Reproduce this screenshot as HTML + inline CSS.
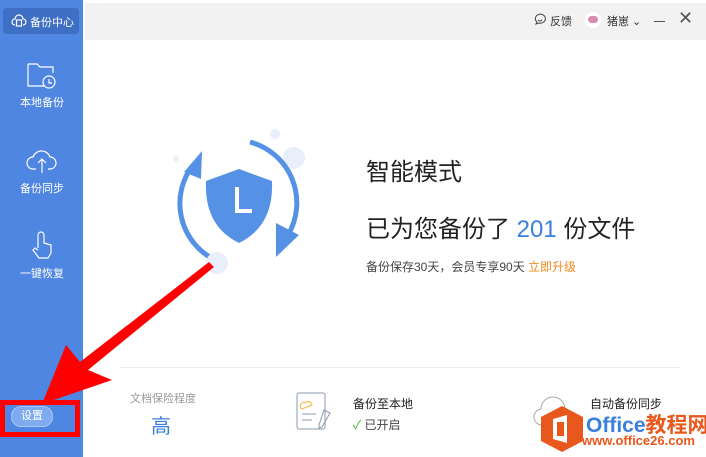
<!DOCTYPE html>
<html><head><meta charset="utf-8"><style>
body{margin:0;width:706px;height:457px;overflow:hidden;background:#fff;font-family:"Liberation Sans","Noto Sans CJK SC",sans-serif;position:relative}
.sb{position:absolute;left:0;top:0;width:83px;height:457px;background:#4f86e1}
.top{position:absolute;left:85px;top:3px;right:0;height:37px;background:#f2f2f2}
.t{position:absolute;white-space:nowrap}
.w{color:#fff;font-size:11px}
</style></head><body>
<div class="sb"></div>
<div style="position:absolute;left:3px;top:8px;width:76px;height:26px;background:#3f6fc4;border-radius:4px"></div>
<div class="t w" style="left:30px;top:14px;font-size:11px">备份中心</div>
<svg style="position:absolute;left:11px;top:14px" width="16" height="14" viewBox="0 0 16 14" fill="none" stroke="#fff" stroke-width="1.2"><path d="M4 11a3 3 0 0 1 0-6 4 4 0 0 1 8 0 3 3 0 0 1 0 6"/><rect x="5.5" y="6" width="5" height="6"/></svg>
<svg style="position:absolute;left:27px;top:62px" width="30" height="28" fill="none" stroke="#fff" stroke-width="1.2"><path d="M1 2h9l3 3h13v6M1 2v22h17"/><circle cx="22" cy="20" r="6"/><path d="M22 17v4h3"/></svg>
<div class="t w" style="left:20px;top:94px">本地备份</div>
<svg style="position:absolute;left:26px;top:147px" width="32" height="28" fill="none" stroke="#fff" stroke-width="1.2"><path d="M10 22H7a6 6 0 0 1 0-12 9 9 0 0 1 17 0 6 6 0 0 1 0 12h-2M16 26V12M12 16l4-4 4 4"/></svg>
<div class="t w" style="left:20px;top:180px">备份同步</div>
<svg style="position:absolute;left:28px;top:230px" width="28" height="30" fill="none" stroke="#fff" stroke-width="1.2"><path d="M10 18V5a3 3 0 0 1 6 0v8l7 2v8l-3 5H11l-6-8 2-2 3 2"/></svg>
<div class="t w" style="left:20px;top:265px">一键恢复</div>
<div style="position:absolute;left:0;top:400px;width:80px;height:37px;background:red"></div>
<div style="position:absolute;left:5px;top:405px;width:70px;height:27px;background:#4f86e1"></div>
<div style="position:absolute;left:11px;top:406px;width:40px;height:19px;background:#7eaaf0;border:1px solid #a9c6f5;border-radius:10px;color:#fff;font-size:11px;text-align:center;line-height:19px">设置</div>
<div class="top"></div>
<svg style="position:absolute;left:533px;top:13px" width="14" height="13" fill="none" stroke="#444" stroke-width="1"><path d="M3 11l1-2a5 4.5 0 1 1 2 1z"/><path d="M5 7q2 2 4 0"/></svg>
<div class="t" style="left:550px;top:13px;font-size:11px;color:#333">反馈</div>
<div style="position:absolute;left:585px;top:12px;width:16px;height:16px;border-radius:8px;background:#fff"></div>
<div style="position:absolute;left:588px;top:16px;width:10px;height:7px;border-radius:4px;background:#d98cb0"></div>
<div class="t" style="left:607px;top:13px;font-size:11px;color:#333">猪崽 ⌄</div>
<div style="position:absolute;left:654px;top:21px;width:11px;height:1px;background:#555"></div>
<div class="t" style="left:678px;top:8px;font-size:18px;color:#555">✕</div>
<svg style="position:absolute;left:160px;top:120px" width="160" height="160">
<circle cx="115" cy="14" r="5" fill="#e8eefa"/><circle cx="134" cy="38" r="11" fill="#e8eefa"/><circle cx="16" cy="39" r="3" fill="#e8eefa"/>
<path d="M33 45A63 63 0 0 0 55 140" fill="none" stroke="#5592e6" stroke-width="5"/>
<path d="M24 52l18-21 -1 28z" fill="#5592e6"/>
<path d="M90 22A63 63 0 0 1 128 115" fill="none" stroke="#5592e6" stroke-width="5"/>
<path d="M116 103l0 34 23-22z" fill="#5592e6"/>
<circle cx="57" cy="143" r="11" fill="#e8eefa"/>
<path d="M79 49l33 12q2 45-33 62q-35-17-33-62z" fill="#5592e6"/>
<path d="M77 67v24h15" stroke="#fff" stroke-width="4" fill="none"/>
</svg>
<svg style="position:absolute;left:0;top:0" width="706" height="457"><path d="M214 267L88 370 112 380 42 404 66 345 80 362 209 262z" fill="#f00"/></svg>
<div class="t" style="left:366px;top:152px;font-size:24px;color:#222">智能模式</div>
<div class="t" style="left:366px;top:209px;font-size:24px;color:#222">已为您备份了 <span style="color:#3b7fdc">201</span> 份文件</div>
<div class="t" style="left:366px;top:258px;font-size:12px;color:#444">备份保存30天，会员专享90天 <span style="color:#f08a1c">立即升级</span></div>
<div style="position:absolute;left:120px;top:367px;width:560px;height:1px;background:#eaeaea"></div>
<div class="t" style="left:130px;top:390px;font-size:11px;color:#999">文档保险程度</div>
<div class="t" style="left:151px;top:410px;font-size:20px;color:#3b7fdc">高</div>
<svg style="position:absolute;left:296px;top:392px" width="40" height="40" fill="none" stroke="#8a9ab0" stroke-width="1"><rect x="1" y="1" width="28" height="36" rx="2"/><path d="M6 17a3 3 0 0 1 3-6 4 4 0 0 1 7 2z" stroke="#f3b33d"/><path d="M6 22h14M6 28h10M28 18l6 3-8 14-3 1 0-3z"/></svg>
<div class="t" style="left:353px;top:395px;font-size:12px;color:#222">备份至本地</div>
<div class="t" style="left:353px;top:416px;font-size:12px;color:#444"><span style="color:#3cb035">✓</span> 已开启</div>
<svg style="position:absolute;left:533px;top:390px" width="40" height="40" fill="none" stroke="#aaa" stroke-width="1"><path d="M10 35a8 8 0 0 1-2-16 12 12 0 0 1 24 0 8 8 0 0 1-2 16"/></svg>
<div class="t" style="left:590px;top:395px;font-size:12px;color:#222">自动备份同步</div>
<svg style="position:absolute;left:540px;top:405px" width="44" height="48"><path d="M22 1l21 11v24L22 47 1 36V12z" fill="#e8581c"/><path d="M13 14l14-4v28l-14-4z" fill="#fff"/><path d="M17 17h7v14h-7z" fill="#e8581c"/></svg>
<div class="t" style="left:586px;top:409px;font-size:21px;font-weight:bold;color:#3b7fdc">Office<span style="color:#e8581c">教程网</span></div>
<div class="t" style="left:582px;top:433px;font-size:13px;font-weight:bold;color:#e8581c">www.office26.com</div>
</body></html>
